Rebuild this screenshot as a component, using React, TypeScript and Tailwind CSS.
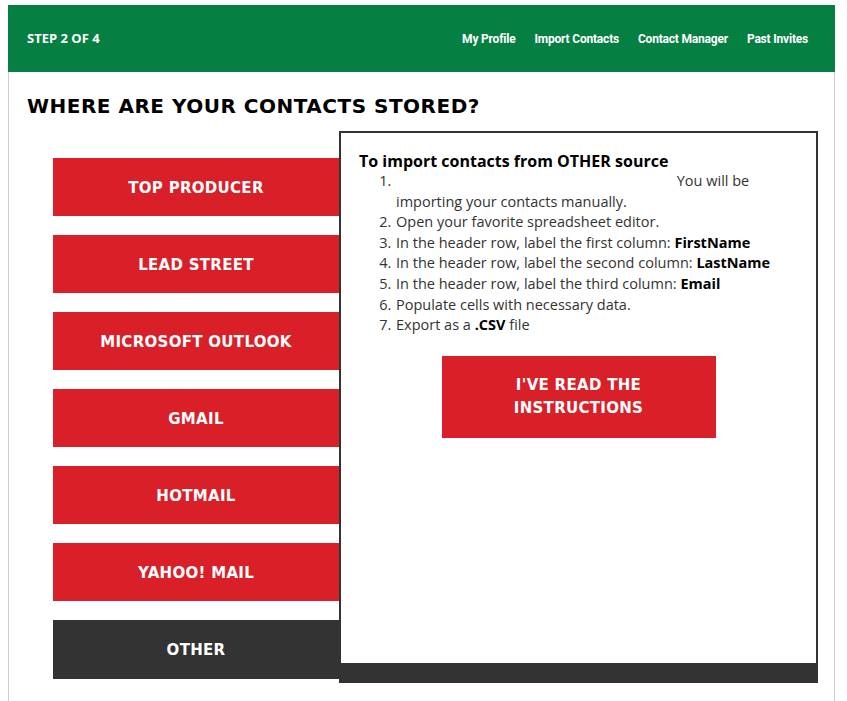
import React from "react";

const sources = [
  "TOP PRODUCER",
  "LEAD STREET",
  "MICROSOFT OUTLOOK",
  "GMAIL",
  "HOTMAIL",
  "YAHOO! MAIL",
];

const navLinks = ["My Profile", "Import Contacts", "Contact Manager", "Past Invites"];

const App: React.FC = () => {
  return (
    <div className="bg-white min-h-[701px] pt-[5px] font-['Open_Sans','Lato',sans-serif]">
      <div className="mx-[8px] w-[827px] min-h-[696px] border-x border-[#cfcfcf]">
        {/* Header */}
        <header className="-mx-px h-[67px] bg-[#067f42] flex items-center justify-between pl-[19px] pr-[27px]">
          <div className="text-white font-bold text-[13px]">STEP 2 OF 4</div>
          <nav className="flex items-center gap-[19px] text-white font-bold text-[12px] tracking-[-0.2px] font-['Roboto',sans-serif]">
            {navLinks.map((link) => (
              <a key={link} href="#" className="whitespace-nowrap">
                {link}
              </a>
            ))}
          </nav>
        </header>

        {/* Title */}
        <h1 className="mt-[22px] ml-[18px] text-[20px] leading-[24px] font-bold text-black font-['DejaVu_Sans',sans-serif] tracking-[0.5px]">
          WHERE ARE YOUR CONTACTS STORED?
        </h1>

        {/* Body */}
        <div className="flex mt-[13px] ml-[44px]">
          <div className="w-[286px] pt-[27px] flex flex-col gap-[19px] font-['DejaVu_Sans',sans-serif]">
            {sources.map((s) => (
              <button
                key={s}
                className="h-[58px] w-full pt-[2px] bg-[#d91f27] text-white font-bold text-[15px] tracking-[0.3px]"
              >
                {s}
              </button>
            ))}
            <button className="h-[59px] w-full pt-[2px] bg-[#333333] text-white font-bold text-[15px] tracking-[0.3px]">
              OTHER
            </button>
          </div>

          {/* Instructions panel */}
          <div className="w-[479px] h-[552px] border-x-2 border-t-2 border-b-[20px] border-[#333333] bg-white pl-[18px] pt-[19px]">
            <h2 className="text-[16px] leading-[19px] font-bold text-black">
              To import contacts from OTHER source
            </h2>
            <ol className="list-decimal ml-[36px] mr-[40px] text-[14.5px] leading-[20.6px] text-[#333333]">
              <li className="pl-[1px]">
                <span className="inline-block w-[277px]" /> You will be importing your contacts manually.
              </li>
              <li className="pl-[1px]">Open your favorite spreadsheet editor.</li>
              <li className="pl-[1px]">
                In the header row, label the first column: <b className="text-black">FirstName</b>
              </li>
              <li className="pl-[1px]">
                In the header row, label the second column: <b className="text-black">LastName</b>
              </li>
              <li className="pl-[1px]">
                In the header row, label the third column: <b className="text-black">Email</b>
              </li>
              <li className="pl-[1px]">Populate cells with necessary data.</li>
              <li className="pl-[1px]">
                Export as a <b className="text-black">.CSV</b> file
              </li>
            </ol>
            <div className="flex justify-center pr-[18px] mt-[20px]">
              <button className="w-[274px] h-[82px] bg-[#d91f27] text-white font-bold text-[15px] leading-[23px] tracking-[0.3px] font-['DejaVu_Sans',sans-serif]">
                I'VE READ THE
                <br />
                INSTRUCTIONS
              </button>
            </div>
          </div>
        </div>
      </div>
    </div>
  );
};

export default App;
